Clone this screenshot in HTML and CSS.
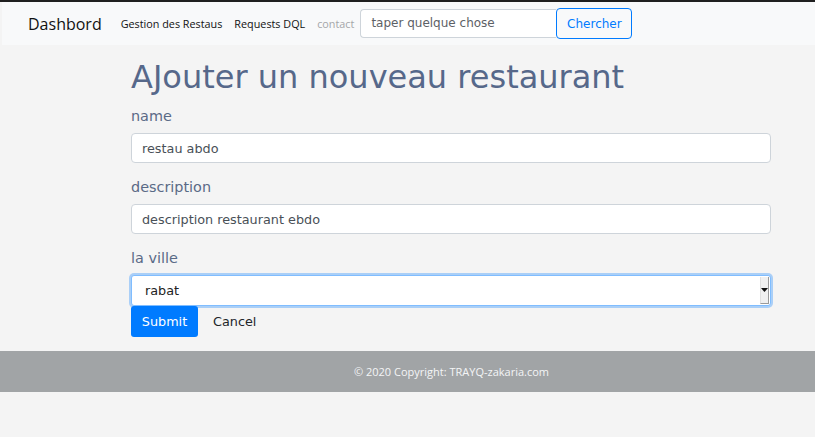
FILE: index.html
```html
<!DOCTYPE html>
<html lang="fr">
<head>
<meta charset="utf-8">
<title>Ajouter un restaurant</title>
<link rel="stylesheet" href="styles.css">
</head>
<body>
<nav class="navbar">
  <a class="brand" href="#">Dashbord</a>
  <ul class="nav-links">
    <li><a href="#">Gestion des Restaus</a></li>
    <li><a href="#">Requests DQL</a></li>
    <li><a class="muted" href="#">contact</a></li>
  </ul>
  <form class="search">
    <input class="search-input" type="text" placeholder="taper quelque chose">
    <button class="search-btn" type="button">Chercher</button>
  </form>
</nav>

<main class="main">
  <h1 class="title">AJouter un nouveau restaurant</h1>
  <form class="form">
    <div class="group">
      <label class="label">name</label>
      <input class="field" type="text" value="restau abdo">
    </div>
    <div class="group">
      <label class="label">description</label>
      <input class="field" type="text" value="description restaurant ebdo">
    </div>
    <div class="group last">
      <label class="label">la ville</label>
      <div class="select-wrap">
        <select class="field select">
          <option>rabat</option>
        </select>
        <span class="select-arrow"><svg width="7" height="4" viewBox="0 0 7 4"><path d="M0 0H7L3.5 4Z" fill="#111"/></svg></span>
      </div>
    </div>
    <div class="actions">
      <button class="btn-submit" type="button">Submit</button>
      <a class="btn-cancel" href="#">Cancel</a>
    </div>
  </form>
</main>

<footer class="footer">© 2020 Copyright: TRAYQ-zakaria.com</footer>
</body>
</html>
```

FILE: styles.css
```css
* { box-sizing: border-box; }

html, body {
  margin: 0;
  padding: 0;
  background: #f4f4f4;
}

body {
  border-top: 2px solid #1f1f1f;
  font-family: "DejaVu Sans", sans-serif;
  min-height: 437px;
}

.navbar {
  margin-left: 2px;
  height: 43px;
  background: #f8f9fa;
  display: flex;
  align-items: center;
  padding-left: 26px;
}

.brand {
  font-family: "Open Sans", sans-serif;
  font-size: 16px;
  color: #111;
  text-decoration: none;
  margin-right: 19px;
}

.nav-links {
  list-style: none;
  margin: 0;
  padding: 0;
  display: flex;
  gap: 12px;
  font-family: "Open Sans", sans-serif;
  font-size: 10.8px;
  margin-right: 6px;
}

.nav-links a {
  color: #111;
  text-decoration: none;
}

.nav-links a.muted {
  color: #a4a6a8;
}

.search {
  display: flex;
  margin: 0;
  align-items: center;
  height: 30px;
}

.search-input {
  width: 196px;
  height: 29px;
  border: 1px solid #ced4da;
  border-right: none;
  border-radius: 4px 0 0 4px;
  background: #fff;
  padding: 0 10px;
  font-family: "DejaVu Sans", sans-serif;
  font-size: 12px;
  outline: none;
  margin-top: -1px;
}

.search-input::placeholder {
  color: #5d6166;
  opacity: 1;
}

.search-btn {
  height: 31px;
  width: 76px;
  border: 1px solid #007bff;
  border-radius: 4px;
  background: transparent;
  color: #007bff;
  font-family: "DejaVu Sans", sans-serif;
  font-size: 12px;
  padding: 0;
}

.main {
  width: 640px;
  margin-left: 131px;
  padding-top: 13px;
}

.title {
  margin: 0 0 10px;
  font-weight: normal;
  font-size: 32px;
  line-height: 38px;
  color: #56688a;
}

.form {
  margin: 0;
}

.group {
  margin-bottom: 14px;
}

.group.last {
  margin-bottom: 0;
}

.label {
  display: block;
  font-size: 14.4px;
  line-height: 20px;
  color: #5a6a86;
  margin-bottom: 7px;
}

.field {
  display: block;
  width: 100%;
  height: 30px;
  border: 1px solid #ced4da;
  border-radius: 4px;
  background: #fff;
  padding: 0 10px;
  font-family: "DejaVu Sans", sans-serif;
  font-size: 12.8px;
  color: #495057;
  outline: none;
}

.select-wrap {
  position: relative;
}

.select {
  -webkit-appearance: none;
  appearance: none;
  height: 31px;
  border-color: #80bdff;
  box-shadow: 0 0 0 2px rgba(0, 123, 255, 0.3);
  padding-left: 13px;
  color: #222;
  border-radius: 3px;
}

.select-arrow {
  position: absolute;
  right: 2px;
  top: 2px;
  bottom: 2px;
  width: 9px;
  background: #f0f0f0;
  border-right: 1px solid #9a9a9a;
  border-bottom: 1px solid #9a9a9a;
  border-left: 1px solid #e0e0e0;
  display: flex;
  align-items: center;
  justify-content: center;
}

.actions {
  display: flex;
  align-items: center;
  gap: 15px;
}

.btn-submit {
  width: 67px;
  height: 31px;
  border: none;
  border-radius: 3px;
  background: #007bff;
  color: #fff;
  font-family: "DejaVu Sans", sans-serif;
  font-size: 12.8px;
  padding: 0 0 1px;
}

.btn-cancel {
  font-size: 12.8px;
  color: #212529;
  text-decoration: none;
  padding-bottom: 1px;
}

.footer {
  margin-top: 14px;
  height: 41px;
  background: #a1a4a6;
  color: #f4f5f6;
  font-family: "Open Sans", sans-serif;
  font-size: 11px;
  display: flex;
  align-items: center;
  justify-content: center;
  padding-left: 88px;
}
```
